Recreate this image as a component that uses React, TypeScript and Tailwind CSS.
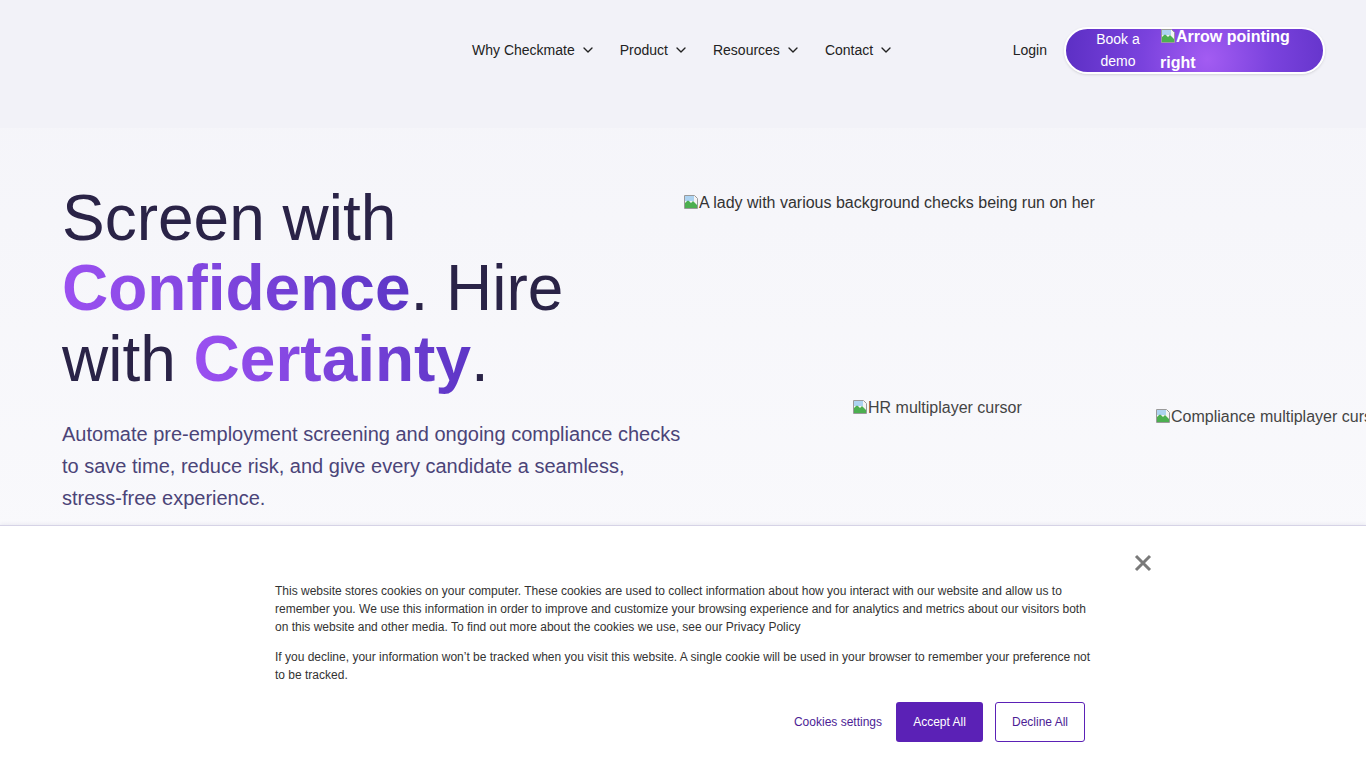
import { ChevronDown } from "lucide-react";

function BrokenImg() {
  return (
    <svg width="16" height="16" viewBox="0 0 16 16" className="inline-block shrink-0 align-[-2px]">
      <path d="M1.5 1.5h10l3 3v10h-13z" fill="#f4f4f4" stroke="#9a9a9a" />
      <path d="M2 9l3-3 3 3 2-2 4 4v3H2z" fill="#4caf50" />
      <rect x="2" y="2" width="9" height="5" fill="#8ec5ef" opacity="0.7" />
    </svg>
  );
}

const navItems = ["Why Checkmate", "Product", "Resources", "Contact"];

export default function App() {
  return (
    <div
      className="relative h-[768px] w-full overflow-hidden bg-gradient-to-b from-[#f4f4f9] to-[#fbfbfd] text-[#2a2347]"
      style={{ fontFamily: "'Liberation Sans', Arial, sans-serif" }}
    >
      {/* Header */}
      <header className="h-[128px] bg-[#f2f2f8]">
        <div className="flex h-[100px] items-center pl-[472px] pr-[41px]">
          <nav className="flex items-center gap-[24px] text-[14px] text-[#222]">
            {navItems.map((n) => (
              <button key={n} className="flex items-center gap-[5px]">
                {n}
                <ChevronDown size={16} strokeWidth={2} />
              </button>
            ))}
          </nav>
          <div className="ml-auto flex items-center gap-[17px]">
            <a className="text-[14px] text-[#222]">Login</a>
            <button className="flex h-[47px] w-[261px] items-center rounded-full border-2 border-white bg-[radial-gradient(circle_at_55%_70%,#a35cf2_0%,#7a42dd_45%,#5c2fc4_100%)] pl-[28px] pr-3 text-white shadow-sm">
              <span className="w-[48px] text-center text-[14px] leading-[22px]">Book a demo</span>
              <span className="ml-[18px] mt-[-5px] w-[150px] self-start text-left text-[16px] font-bold leading-[26px]">
                <BrokenImg />
                Arrow pointing right
              </span>
            </button>
          </div>
        </div>
      </header>

      {/* Hero */}
      <section className="relative flex pl-[62px] pt-[55px]">
        <div className="w-[630px] shrink-0">
          <h1 className="text-[64px] leading-[70.4px] text-[#2a2347]">
            Screen with{" "}
            <span className="bg-gradient-to-r from-[#9b50f1] to-[#5d36c6] bg-clip-text font-bold text-transparent">
              Confidence
            </span>
            . Hire with{" "}
            <span className="bg-gradient-to-r from-[#9b50f1] to-[#5d36c6] bg-clip-text font-bold text-transparent">
              Certainty
            </span>
            .
          </h1>
          <p className="mt-[24px] w-[622px] text-[20px] leading-[32px] text-[#4b4478]">
            Automate pre-employment screening and ongoing compliance checks to save time, reduce risk, and give every
            candidate a seamless, stress-free experience.
          </p>
        </div>
        <div className="relative h-[340px] flex-1 text-[16px] text-[#333]">
          <div className="absolute left-[-9px] top-[8px] whitespace-nowrap">
            <BrokenImg />A lady with various background checks being run on her
          </div>
          <div className="absolute left-[160px] top-[213px] whitespace-nowrap text-[#444]">
            <BrokenImg />HR multiplayer cursor
          </div>
          <div className="absolute left-[463px] top-[222px] whitespace-nowrap text-[#444]">
            <BrokenImg />Compliance multiplayer cursor
          </div>
        </div>
      </section>

      {/* Cookie banner */}
      <div className="absolute inset-x-0 bottom-0 h-[243px] border-t border-[#d6d3e6] bg-white shadow-[0_-1px_4px_rgba(60,50,120,0.08)]">
        <button className="absolute left-[1133px] top-[27px] text-[#7a7a7a]" aria-label="Close">
          <svg width="20" height="20" viewBox="0 0 20 20">
            <path d="M3 3l14 14M17 3L3 17" stroke="currentColor" strokeWidth="3" />
          </svg>
        </button>
        <div className="mx-auto w-[816px] pt-[56px] text-[12px] leading-[18px] text-[#333]">
          <p>
            This website stores cookies on your computer. These cookies are used to collect information about how you
            interact with our website and allow us to remember you. We use this information in order to improve and
            customize your browsing experience and for analytics and metrics about our visitors both on this website and
            other media. To find out more about the cookies we use, see our Privacy Policy
          </p>
          <p className="mt-[12px]">
            If you decline, your information won’t be tracked when you visit this website. A single cookie will be used in
            your browser to remember your preference not to be tracked.
          </p>
          <div className="mt-[18px] flex items-center justify-end gap-3 pr-[6px]">
            <button className="px-[2px] text-[12px] text-[#4c1d95]">Cookies settings</button>
            <button className="h-[40px] w-[87px] rounded-[3px] bg-[#5b21b6] text-[12px] text-white">Accept All</button>
            <button className="h-[40px] w-[90px] rounded-[3px] border border-[#5b21b6] text-[12px] text-[#4c1d95]">
              Decline All
            </button>
          </div>
        </div>
      </div>
    </div>
  );
}
